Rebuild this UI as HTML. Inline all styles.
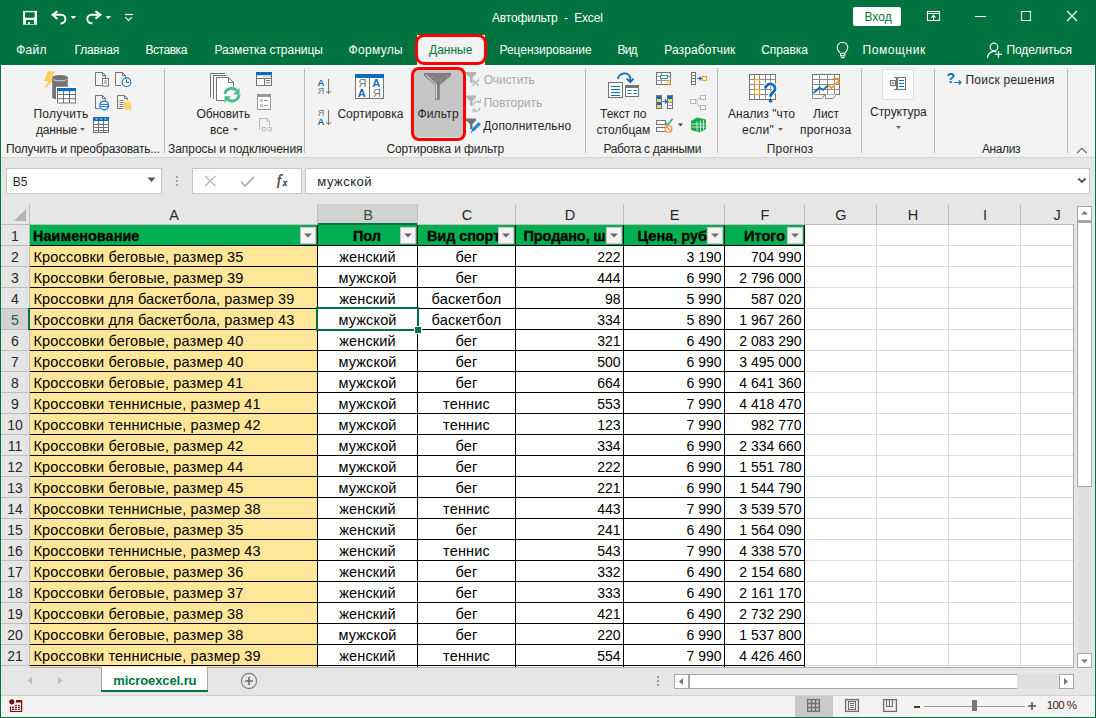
<!DOCTYPE html>
<html><head><meta charset="utf-8"><title>Автофильтр - Excel</title>
<style>
html,body{margin:0;padding:0;}
body{width:1096px;height:718px;overflow:hidden;position:relative;background:#f3f3f3;font-family:"Liberation Sans",sans-serif;}
body>div,body>span,body>svg{position:absolute;}
.t{white-space:pre;line-height:1;}
</style></head><body>
<div style="left:0px;top:0px;width:1096px;height:65px;background:#00733f"></div>
<svg style="left:22px;top:10px;" width="16" height="16" viewBox="0 0 16 16"><rect x="1.1" y="0.9" width="13.9" height="13.8" fill="#fff"/><path d="M3 2.2H12.7V7L11.8 7.8H3.9L3 7z" fill="#00733f"/><path d="M4 10H12V13.9H7.9V12H6.1V13.9H4z" fill="#00733f"/></svg>
<svg style="left:51px;top:10px;" width="18" height="15" viewBox="0 0 18 15"><path d="M1.8 4.8H10.2A4.2 4.3 0 0 1 10.2 13.4H9.5" fill="none" stroke="#fff" stroke-width="2"/><path d="M6.4 1.2L1.6 4.8L6.4 8.9" fill="none" stroke="#fff" stroke-width="2"/></svg>
<svg style="left:70px;top:15px;" width="7" height="5" viewBox="0 0 7 5"><path d="M0.6 1h5.6l-2.8 3z" fill="#fff"/></svg>
<svg style="left:86px;top:10px;" width="18" height="15" viewBox="0 0 18 15"><path d="M14.6 4.8H5.5A4.2 4.2 0 0 0 5.5 13.2H6.5" fill="none" stroke="#fff" stroke-width="2"/><path d="M9.4 1.2L14.4 4.8L9.4 8.6" fill="none" stroke="#fff" stroke-width="2"/></svg>
<svg style="left:105px;top:15px;" width="7" height="5" viewBox="0 0 7 5"><path d="M0.6 1h5.6l-2.8 3z" fill="#fff"/></svg>
<svg style="left:124px;top:13px;" width="10" height="9" viewBox="0 0 10 9"><path d="M1 1.5h8" stroke="#fff" stroke-width="1.2"/><path d="M1.2 4.2l3.3 3.3 3.5-3.3" fill="none" stroke="#fff" stroke-width="1.1"/></svg>
<span class="t" style="left:492px;top:11.84px;font-size:12px;color:#fff;font-weight:normal;letter-spacing:-0.158px;">Автофильтр&nbsp;&nbsp;-&nbsp;&nbsp;Excel</span>
<div style="left:853px;top:7px;width:48px;height:19px;background:#fff;border-radius:2px"></div>
<span class="t" style="left:864.5px;top:10.84px;font-size:12px;color:#00733f;font-weight:normal;letter-spacing:0px">Вход</span>
<svg style="left:926px;top:10px;" width="15" height="12" viewBox="0 0 15 12"><rect x="1.5" y="1.5" width="12" height="9" fill="none" stroke="#fff" stroke-width="1.1"/><path d="M1.5 3.5h12" stroke="#fff" stroke-width="1"/><path d="M7.5 10v-4.5M5.3 7.6l2.2-2.2 2.2 2.2" fill="none" stroke="#fff" stroke-width="1.1"/></svg>
<div style="left:975px;top:16px;width:11px;height:1px;background:#fff"></div>
<div style="left:1021px;top:11px;width:10px;height:10px;border:1px solid #fff;box-sizing:border-box"></div>
<svg style="left:1066px;top:10px;" width="12" height="12" viewBox="0 0 12 12"><path d="M1 1l10 10M11 1L1 11" stroke="#fff" stroke-width="1.2"/></svg>
<span class="t" style="left:16.25px;top:43.84px;font-size:12px;color:#fff;font-weight:normal;letter-spacing:0.25px;">Файл</span>
<span class="t" style="left:74.5px;top:43.84px;font-size:12px;color:#fff;font-weight:normal;letter-spacing:-0.167px;">Главная</span>
<span class="t" style="left:145.5px;top:43.84px;font-size:12px;color:#fff;font-weight:normal;letter-spacing:-0.458px;">Вставка</span>
<span class="t" style="left:214.5px;top:43.84px;font-size:12px;color:#fff;font-weight:normal;letter-spacing:-0.031px;">Разметка страницы</span>
<span class="t" style="left:348.5px;top:43.84px;font-size:12px;color:#fff;font-weight:normal;letter-spacing:0.333px;">Формулы</span>
<span class="t" style="left:499.5px;top:43.84px;font-size:12px;color:#fff;font-weight:normal;letter-spacing:-0.038px;">Рецензирование</span>
<span class="t" style="left:617.5px;top:43.84px;font-size:12px;color:#fff;font-weight:normal;letter-spacing:-0.85px;">Вид</span>
<span class="t" style="left:664.25px;top:43.84px;font-size:12px;color:#fff;font-weight:normal;letter-spacing:0.1px;">Разработчик</span>
<span class="t" style="left:761.25px;top:43.84px;font-size:12px;color:#fff;font-weight:normal;letter-spacing:-0.083px;">Справка</span>
<span class="t" style="left:862.5px;top:43.84px;font-size:12px;color:#fff;font-weight:normal;letter-spacing:0.571px;">Помощник</span>
<span class="t" style="left:1006.5px;top:43.84px;font-size:12px;color:#fff;font-weight:normal;letter-spacing:-0.083px;">Поделиться</span>
<div style="left:417px;top:35px;width:68px;height:31px;background:#f3f3f3"></div>
<span class="t" style="left:429px;top:43.84px;font-size:12px;color:#00733f;font-weight:normal;letter-spacing:0.0px;">Данные</span>
<svg style="left:835px;top:41px;" width="16" height="19" viewBox="0 0 16 19"><path d="M4.8 11.8C3.5 10.2 2.2 8.8 2.2 6.6A5.3 5.4 0 0 1 12.8 6.6C12.8 8.8 11.5 10.2 10.2 11.8" fill="none" stroke="#fff" stroke-width="1.1"/><rect x="5.6" y="12.3" width="4.2" height="2.5" fill="none" stroke="#fff" stroke-width="1.1"/><path d="M6 16.6H9.4" stroke="#fff" stroke-width="1.2"/></svg>
<svg style="left:986px;top:42px;" width="18" height="17" viewBox="0 0 18 17"><circle cx="8" cy="5" r="3.8" fill="none" stroke="#fff" stroke-width="1.2"/><path d="M1.5 16a6.5 6.5 0 0 1 9-6" fill="none" stroke="#fff" stroke-width="1.2"/><path d="M12.5 9v6.8M9.2 12.4h6.8" stroke="#fff" stroke-width="1.2"/></svg>
<div style="left:1px;top:65px;width:1094px;height:93px;background:#f3f3f3;border-top:1px solid #fff;border-bottom:1px solid #d5d5d5;box-sizing:border-box"></div>
<div style="left:1px;top:65px;width:1px;height:92px;background:#fff"></div>
<div style="left:415px;top:34px;width:72px;height:31px;border:3px solid #f00;border-radius:9px;box-sizing:border-box"></div>
<div style="left:164px;top:69px;width:1px;height:84px;background:#b9b9b9"></div>
<div style="left:304px;top:69px;width:1px;height:84px;background:#b9b9b9"></div>
<div style="left:585px;top:69px;width:1px;height:84px;background:#b9b9b9"></div>
<div style="left:717px;top:69px;width:1px;height:84px;background:#b9b9b9"></div>
<div style="left:861px;top:69px;width:1px;height:84px;background:#b9b9b9"></div>
<div style="left:934px;top:69px;width:1px;height:84px;background:#b9b9b9"></div>
<div style="left:1067px;top:69px;width:1px;height:84px;background:#b9b9b9"></div>
<svg style="left:40px;top:68px;" width="40" height="38" viewBox="0 0 40 38">
<path d="M7.9 3.2H14.8L10.8 11.2H14.2L4.2 21.9L8.2 13H4z" fill="#f9cf5a"/>
<path d="M12.2 9.6V29.5A7.8 2 0 0 0 27.8 29.5V9.6z" fill="#737373"/>
<ellipse cx="20" cy="9.6" rx="7.8" ry="2.6" fill="#737373"/>
<path d="M13.5 11.3A6.5 1.6 0 0 0 26.5 11.3" fill="none" stroke="#e8e8e8" stroke-width=".9"/>
<rect x="16" y="18.8" width="21" height="17.2" fill="#fff"/>
<rect x="17.5" y="20.5" width="18" height="14.5" fill="#fff" stroke="#737373" stroke-width="1"/>
<rect x="17" y="20" width="19" height="3.2" fill="#0f6cbd"/>
<path d="M17.5 26.5h18M17.5 30.7h18M23.5 23v12M29.5 23v12" stroke="#737373" stroke-width="1"/>
</svg>
<span class="t" style="left:33.4px;top:107.84px;font-size:12px;color:#262626;font-weight:normal;letter-spacing:0.314px;">Получить</span>
<span class="t" style="left:36px;top:124.14px;font-size:12px;color:#262626;font-weight:normal;letter-spacing:-0.2px;">данные</span>
<svg style="left:80px;top:128px;" width="6" height="4" viewBox="0 0 6 4"><path d="M0 0h5l-2.5 3z" fill="#666"/></svg>
<svg style="left:90px;top:68px;" width="46" height="68" viewBox="0 0 46 68">
<path d="M5.5 17.5V4.5H12.5L15.5 7.5V10.5" fill="none" stroke="#737373"/><path d="M12.5 4.5V7.5H15.5" fill="none" stroke="#737373"/><path d="M11.5 17.5H5.5" stroke="#737373"/>
<rect x="12.5" y="10.5" width="6" height="7.5" fill="#fff" stroke="#737373"/><path d="M14 13h3M14 15h3" stroke="#737373" stroke-width=".9"/>
<path d="M25.5 17.5V4.5H32.5L35.5 7.5V10" fill="none" stroke="#737373"/><path d="M32.5 4.5V7.5H35.5" fill="none" stroke="#737373"/><path d="M25.5 17.5H31" stroke="#737373"/>
<circle cx="36.5" cy="14.2" r="4.3" fill="#fff" stroke="#1e7bd0" stroke-width="1.2"/><path d="M36.5 11.5V14.5H39" fill="none" stroke="#444" stroke-width="1"/>
<path d="M5.5 40.5V27.5H12.5L15.5 30.5V33" fill="none" stroke="#737373"/><path d="M12.5 27.5V30.5H15.5" fill="none" stroke="#737373"/><path d="M5.5 40.5H9.5" stroke="#737373"/>
<circle cx="14.2" cy="37.4" r="4.3" fill="#fff" stroke="#1e7bd0" stroke-width="1.4"/><path d="M10.5 36.5h7.5M10.5 38.5h7.5" stroke="#1e7bd0" stroke-width="1"/>
<path d="M27.5 40.5V27.5H34.5L37.5 30.5V32" fill="none" stroke="#737373"/><path d="M34.5 27.5V30.5H37.5" fill="none" stroke="#737373"/><path d="M27.5 40.5H33" stroke="#737373"/>
<path d="M29.5 32.5h4M29.5 34.5h4M29.5 36.5h4M29.5 38.5h4" stroke="#737373" stroke-width=".9"/>
<rect x="34" y="32.5" width="7.2" height="9.2" rx="1.5" fill="#fbd26a"/><path d="M34.5 33.8h6.2" stroke="#fff" stroke-width=".8"/>
<rect x="3.5" y="49.5" width="15" height="15" fill="#fff" stroke="#737373"/>
<rect x="3" y="49" width="16" height="4" fill="#0f6cbd"/><path d="M5.5 51h2M10 51h2M14.5 51h2" stroke="#fff" stroke-width=".9"/>
<path d="M3.5 56.5h15M3.5 59.5h15M3.5 62.5h15M8.5 53v12M13.5 53v12" stroke="#737373" stroke-width="1"/>
</svg>
<span class="t" style="left:6px;top:143.24px;font-size:12px;color:#262626;font-weight:normal;letter-spacing:-0.2px">Получить и преобразовать...</span>
<svg style="left:205px;top:68px;" width="40" height="38" viewBox="0 0 40 38">
<path d="M5.5 29V5.5H20" fill="none" stroke="#737373"/>
<path d="M8.5 30.8V7.5H21.8" fill="none" stroke="#737373"/>
<path d="M11.5 32.5V9.5H23.5L28.5 14.5V32.5z" fill="#fff"/>
<path d="M19 32.5H11.5V9.5H23.5L28.5 14.5V18.5" fill="none" stroke="#737373"/>
<path d="M23.5 9.5V14.5H28.5" fill="none" stroke="#737373"/>
<path d="M19.8 26A7 7 0 0 1 31.8 22.5" fill="none" stroke="#4cb98a" stroke-width="2.8"/>
<path d="M34.2 26.5A7 7 0 0 1 22.2 30.8" fill="none" stroke="#4cb98a" stroke-width="2.8"/>
<path d="M34.5 20V26.5H28z" fill="#4cb98a"/>
<path d="M19.5 35V28.3H26z" fill="#4cb98a"/>
</svg>
<span class="t" style="left:196.5px;top:107.84px;font-size:12px;color:#262626;font-weight:normal;letter-spacing:-0.086px;">Обновить</span>
<span class="t" style="left:210px;top:124.14px;font-size:12px;color:#262626;font-weight:normal;">все</span>
<svg style="left:233px;top:128px;" width="6" height="4" viewBox="0 0 6 4"><path d="M0 0h5l-2.5 3z" fill="#666"/></svg>
<svg style="left:250px;top:68px;" width="30" height="68" viewBox="0 0 30 68">
<rect x="6.5" y="4.5" width="15" height="13" fill="#fff" stroke="#737373"/><rect x="6" y="4" width="16" height="3.2" fill="#0f6cbd"/>
<path d="M6.5 10.5h15M14.5 10.5v7" stroke="#737373" stroke-width="1"/><path d="M13.5 8.8h1M15.5 8.8h1M17.5 8.8h1M19.5 8.8h1" stroke="#737373" stroke-width=".9"/>
<path d="M16 12.5h4M16 14.8h4" stroke="#737373" stroke-width="1"/>
<rect x="7.5" y="26.5" width="13" height="15" fill="#fff" stroke="#9a9a9a"/><rect x="7" y="26" width="14" height="3" fill="#9a9a9a"/>
<circle cx="11.4" cy="32.5" r="1.2" fill="#9a9a9a"/><circle cx="11.4" cy="37.5" r="1.2" fill="none" stroke="#9a9a9a" stroke-width=".9"/><path d="M14 32.5h4M14 37.5h4" stroke="#9a9a9a" stroke-width="1.1"/>
<path d="M9.5 62V50.5H17L19.5 53V58" fill="none" stroke="#b8b8b8"/><path d="M17 50.5V53H19.5" fill="none" stroke="#b8b8b8"/>
<path d="M16 59.5H13.5A1.8 1.8 0 0 0 13.5 63H16M18 59.5H20.5A1.8 1.8 0 0 1 20.5 63H18M14.5 61.2H19.5" fill="none" stroke="#b8b8b8" stroke-width="1.1"/>
</svg>
<span class="t" style="left:168px;top:143.24px;font-size:12px;color:#262626;font-weight:normal;letter-spacing:-0.05px;">Запросы и подключения</span>
<svg style="left:316px;top:77px;" width="17" height="50" viewBox="0 0 17 50">
<text x="1.6" y="8.8" font-family="Liberation Sans" font-size="9.5" font-weight="bold" fill="#0f6cbd">A</text>
<text x="1.8" y="16.8" font-family="Liberation Sans" font-size="9" fill="#737373">Я</text>
<path d="M12.6 2v14.5M10.1 14l2.5 2.6 2.5-2.6" fill="none" stroke="#6e6e6e" stroke-width="1"/>
<text x="1.8" y="39.4" font-family="Liberation Sans" font-size="9" fill="#737373">Я</text>
<text x="1.6" y="47.9" font-family="Liberation Sans" font-size="9.5" font-weight="bold" fill="#0f6cbd">A</text>
<path d="M12.6 33v14.5M10.1 45l2.5 2.6 2.5-2.6" fill="none" stroke="#6e6e6e" stroke-width="1"/>
</svg>
<svg style="left:354px;top:73px;" width="31" height="27" viewBox="0 0 31 27">
<rect x="1.5" y="1.5" width="28" height="24" fill="#fff" stroke="#737373"/>
<rect x="1" y="1" width="29" height="4" fill="#0f6cbd"/>
<path d="M15.5 5v20.5" stroke="#737373"/>
<text x="4.5" y="14" font-family="Liberation Sans" font-size="11" fill="#737373">Я</text>
<text x="3.8" y="24" font-family="Liberation Sans" font-size="11" font-weight="bold" fill="#0f6cbd">A</text>
<text x="18.3" y="14" font-family="Liberation Sans" font-size="11" font-weight="bold" fill="#0f6cbd">A</text>
<text x="19" y="24" font-family="Liberation Sans" font-size="11" fill="#737373">Я</text>
</svg>
<span class="t" style="left:337.4px;top:107.84px;font-size:12px;color:#262626;font-weight:normal;letter-spacing:0.022px;">Сортировка</span>
<div style="left:414px;top:70px;width:49px;height:67px;background:#c6c6c6;border-radius:3px"></div>
<div style="left:411px;top:67px;width:55px;height:74px;border:3px solid #f00;border-radius:8px;box-sizing:border-box"></div>
<svg style="left:423px;top:72px;" width="29" height="29" viewBox="0 0 29 29"><path d="M1 1H28V3.5L16.8 13.3V27.8H12V13.3L1 3.5Z" fill="#7f7f7f"/><path d="M3 2.8L13.3 12.8V26.5" fill="none" stroke="#fff" stroke-width="0.9"/><circle cx="9" cy="5" r=".6" fill="#ddd"/><circle cx="12" cy="8" r=".6" fill="#ddd"/><circle cx="15" cy="8" r=".6" fill="#ddd"/><circle cx="18" cy="8" r=".6" fill="#ddd"/><circle cx="13" cy="11" r=".6" fill="#ddd"/><circle cx="18" cy="11" r=".6" fill="#ddd"/><circle cx="24" cy="4" r=".6" fill="#ddd"/></svg>
<span class="t" style="left:417.4px;top:107.84px;font-size:12px;color:#262626;font-weight:normal;letter-spacing:0.18px;">Фильтр</span>
<svg style="left:465px;top:71px;" width="17" height="64" viewBox="0 0 17 64">
<path d="M1 1h10v2l-3.5 3.5v5H5V6.5L1 3z" fill="#b4b4b4"/><path d="M6 11.5h3M7.5 8.5l6.5 6.5M14 8.5l-6.5 6.5" fill="none" stroke="#b4b4b4" stroke-width="1.1"/>
<path d="M1 24.5h10v2l-3.5 3.5v5H5v-5L1 26.5z" fill="#b4b4b4"/><path d="M8.5 34a4 4 0 0 1 6.5-3M15 36.5a4 4 0 0 1-6.5 3" fill="none" stroke="#b4b4b4" stroke-width="1.1"/><path d="M15.5 28.5v3h-3M8 41.5v-3h3" fill="none" stroke="#b4b4b4" stroke-width="1"/>
<path d="M1 47.5h10v2l-3.5 3.5v5H5v-5L1 49.5z" fill="#737373"/><path d="M6 61l1.2-3.5 6.5-6.5 2.3 2.3-6.5 6.5z" fill="#1e8ad8"/><path d="M6 62l1.5-1.5" stroke="#1e8ad8" stroke-width="1"/>
</svg>
<span class="t" style="left:483.7px;top:74.04px;font-size:12px;color:#a8a8a8;font-weight:normal;letter-spacing:-0.157px;">Очистить</span>
<span class="t" style="left:483.7px;top:97.24px;font-size:12px;color:#a8a8a8;font-weight:normal;">Повторить</span>
<span class="t" style="left:483.2px;top:119.94px;font-size:12px;color:#262626;font-weight:normal;letter-spacing:0.133px;">Дополнительно</span>
<span class="t" style="left:386.5px;top:143.24px;font-size:12px;color:#262626;font-weight:normal;letter-spacing:-0.139px;">Сортировка и фильтр</span>
<svg style="left:604px;top:68px;" width="40" height="34" viewBox="0 0 40 34">
<path d="M14 11A6.3 5.8 0 0 1 26.3 9.5V13" fill="none" stroke="#0f6cbd" stroke-width="1.8"/><path d="M22.8 10.6L26.3 14.2L29.6 10.6" fill="none" stroke="#0f6cbd" stroke-width="1.8"/>
<rect x="4.5" y="14.5" width="14" height="15" fill="#fff" stroke="#737373"/>
<path d="M7 18.5h9M7 21.5h9M7 24.5h9M7 27.5h9" stroke="#0f6cbd" stroke-width="1"/>
<rect x="21.5" y="17.5" width="13" height="11" fill="#fff" stroke="#737373"/><rect x="21" y="17" width="14" height="3" fill="#737373"/>
<path d="M23.5 22.5h4M29.5 22.5h3.5M23.5 25.5h4M29.5 25.5h3.5" stroke="#0f6cbd" stroke-width="1"/>
</svg>
<span class="t" style="left:600px;top:107.84px;font-size:12px;color:#262626;font-weight:normal;letter-spacing:-0.029px;">Текст по</span>
<span class="t" style="left:596.5px;top:124.14px;font-size:12px;color:#262626;font-weight:normal;letter-spacing:0.057px;">столбцам</span>
<svg style="left:652px;top:68px;" width="58" height="68" viewBox="0 0 58 68">
<rect x="4.5" y="4.5" width="14" height="12" fill="#fff" stroke="#737373"/><path d="M4.5 8.5h14M4.5 12.5h14M9.5 4.5v12" stroke="#9a9a9a" stroke-width="1"/>
<rect x="8.5" y="7.5" width="7" height="3" fill="#fff" stroke="#2a9d8f" stroke-width="1.1"/>
<path d="M19.5 10L14 15.5H17L13 20.5L20 14H17z" fill="#f9cf5a"/>
<rect x="4.5" y="27.5" width="5" height="13" fill="#fff" stroke="#737373"/><rect x="5" y="28" width="4" height="3" fill="#0f6cbd"/><rect x="5" y="31" width="4" height="3" fill="#fbd26a"/><rect x="5" y="34" width="4" height="3" fill="#0f6cbd"/><rect x="5" y="37" width="4" height="3" fill="#fbd26a"/>
<rect x="15.5" y="27.5" width="5" height="13" fill="#fff" stroke="#737373"/><rect x="16" y="28" width="4" height="3" fill="#0f6cbd"/><rect x="16" y="31" width="4" height="3" fill="#fbd26a"/><path d="M15.5 34.5h5M15.5 37.5h5" stroke="#9a9a9a"/>
<path d="M10.5 33.5h4M13 31.5l2 2-2 2" fill="none" stroke="#0f6cbd" stroke-width="1.2"/>
<rect x="4.5" y="52.5" width="9" height="4" fill="#fff" stroke="#737373"/><rect x="4.5" y="59.5" width="9" height="4" fill="#fff" stroke="#737373"/>
<path d="M13 54.5l2.5 2.5 5-6" fill="none" stroke="#2a9d8f" stroke-width="1.5"/>
<circle cx="16.5" cy="61" r="3.3" fill="#fff" stroke="#f39a2a" stroke-width="1.3"/><path d="M14.3 58.8l4.4 4.4" stroke="#e23b3b" stroke-width="1"/>
<path d="M26 55.5h5l-2.5 2.8z" fill="#5a2a2a"/>
<rect x="39.5" y="4.5" width="4" height="12" fill="#fff" stroke="#737373"/><path d="M39.5 7.5h4M39.5 10.5h4M39.5 13.5h4" stroke="#737373"/>
<path d="M45 10.5h4M47.5 8.8l1.8 1.7-1.8 1.7" fill="none" stroke="#0f6cbd" stroke-width="1.2"/>
<rect x="50.5" y="8.5" width="4" height="4" fill="#fff" stroke="#f39a2a" stroke-width="1.2"/>
<rect x="38.5" y="31.5" width="5" height="4" fill="#fff" stroke="#b4b4b4"/><rect x="48.5" y="27.5" width="5" height="4" fill="#fff" stroke="#b4b4b4"/><rect x="48.5" y="37.5" width="5" height="4" fill="#fff" stroke="#b4b4b4"/>
<path d="M43.5 33.5L48.5 29.5M43.5 33.5L48.5 39.5" fill="none" stroke="#b4b4b4"/>
<path d="M39 53L45 49.5L54 51.5V61L48 64.5L39 62z" fill="#1aa84a"/>
<path d="M45 53.5V63.5M48.5 52.5V64M51.5 52V62M39.5 56h14M39.5 59h14" stroke="#e9f7ee" stroke-width=".8"/>
</svg>
<span class="t" style="left:603.4px;top:143.24px;font-size:12px;color:#262626;font-weight:normal;letter-spacing:-0.32px;">Работа с данными</span>
<svg style="left:744px;top:68px;" width="40" height="38" viewBox="0 0 40 38">
<rect x="5.5" y="6.5" width="26" height="25" fill="#fff" stroke="#737373"/>
<path d="M5.5 11.5h26M5.5 16.5h26M5.5 21.5h26M5.5 26.5h26M10.5 6.5v25M15.5 6.5v25M21.5 6.5v25M26.5 6.5v25" stroke="#8a8a8a" stroke-width="1"/>
<rect x="10.5" y="11.5" width="5" height="5" fill="#fff" stroke="#f39a2a" stroke-width="1.1"/>
<rect x="10.5" y="21.5" width="5" height="5" fill="#fff" stroke="#f39a2a" stroke-width="1.1"/>
<path d="M21.5 20.5A4.8 4.5 0 1 1 29.3 24C27.8 25 26.5 26 26.5 28.8" fill="none" stroke="#fff" stroke-width="5"/>
<path d="M21.5 20.5A4.8 4.5 0 1 1 29.3 24C27.8 25 26.5 26 26.5 28.8" fill="none" stroke="#0f6cbd" stroke-width="2.8"/><rect x="24.8" y="31" width="3.4" height="3.4" fill="#0f6cbd"/>
</svg>
<span class="t" style="left:728px;top:107.84px;font-size:12px;color:#262626;font-weight:normal;letter-spacing:0.06px;">Анализ "что</span>
<span class="t" style="left:742px;top:124.14px;font-size:12px;color:#262626;font-weight:normal;letter-spacing:0.25px;">если"</span>
<svg style="left:778px;top:128px;" width="6" height="4" viewBox="0 0 6 4"><path d="M0 0h5l-2.5 3z" fill="#666"/></svg>
<svg style="left:810px;top:72px;" width="32" height="30" viewBox="0 0 32 30">
<rect x="2.5" y="2.5" width="27" height="20" fill="#fff" stroke="#737373"/>
<path d="M2.5 7.5h27M2.5 12.5h27M2.5 17.5h27M9.5 2.5v20M17.5 2.5v20M24.5 2.5v20" stroke="#8a8a8a" stroke-width="1"/>
<path d="M2.5 22.5V26.5H12L14.5 23M15.5 22.5V26.5H23L26.5 22.5" fill="#fff" stroke="#8a8a8a"/>
<path d="M3.5 21L9.5 15.5L13 18L18 13.5" fill="none" stroke="#0f6cbd" stroke-width="1.7"/>
<path d="M18 13.5L21.5 16L27.5 9.5" fill="none" stroke="#f39a2a" stroke-width="1.7"/>
<path d="M23 6.5H28.5V12" fill="none" stroke="#f39a2a" stroke-width="1.7"/>
</svg>
<span class="t" style="left:813px;top:107.84px;font-size:12px;color:#262626;font-weight:normal;letter-spacing:0.0px;">Лист</span>
<span class="t" style="left:800px;top:124.14px;font-size:12px;color:#262626;font-weight:normal;letter-spacing:0.214px;">прогноза</span>
<span class="t" style="left:766.7px;top:143.24px;font-size:12px;color:#262626;font-weight:normal;letter-spacing:0.217px;">Прогноз</span>
<div style="left:882px;top:69px;width:32px;height:31px;background:#fdfdfd;border:1px solid #dcdcdc;box-sizing:border-box"></div>
<svg style="left:889px;top:76px;" width="19" height="15" viewBox="0 0 19 15"><rect x="1.5" y="4.5" width="5" height="5" fill="none" stroke="#737373"/><path d="M2.5 7h3M4 5.5v3" stroke="#737373" stroke-width=".9"/><path d="M5 1.5h2.5v12H5" fill="none" stroke="#737373"/><rect x="8.5" y="1.5" width="8" height="12" fill="#fff" stroke="#737373"/><path d="M10 4.5h5M10 7.5h5M10 10.5h5" stroke="#0f6cbd" stroke-width="1.2"/></svg>
<span class="t" style="left:870px;top:105.84px;font-size:12px;color:#262626;font-weight:normal;letter-spacing:-0.025px;">Структура</span>
<svg style="left:896px;top:126px;" width="6" height="4" viewBox="0 0 6 4"><path d="M0 0h5l-2.5 3z" fill="#666"/></svg>
<svg style="left:946px;top:71px;" width="17" height="15" viewBox="0 0 17 15"><text x="0.6" y="12" font-family="Liberation Sans" font-size="14" font-weight="bold" fill="#0f6cbd">?</text><path d="M8.5 11.5h6.5M12.8 9.3l2.2 2.2-2.2 2.2" fill="none" stroke="#0f6cbd" stroke-width="1.2"/></svg>
<span class="t" style="left:965.4px;top:73.84px;font-size:12px;color:#262626;font-weight:normal;letter-spacing:0.25px;">Поиск решения</span>
<span class="t" style="left:982px;top:143.24px;font-size:12px;color:#262626;font-weight:normal;letter-spacing:-0.4px;">Анализ</span>
<svg style="left:1076px;top:147px;" width="12" height="7" viewBox="0 0 12 7"><path d="M1 6.2L5.8 1.2L10.8 6.2" fill="none" stroke="#555" stroke-width="1.1"/></svg>
<div style="left:1px;top:158px;width:1094px;height:46px;background:#e6e6e6"></div>
<div style="left:6px;top:168px;width:156px;height:26px;background:#fff;border:1px solid #c6c6c6;box-sizing:border-box"></div>
<span class="t" style="left:12.8px;top:176.34px;font-size:12px;color:#262626;font-weight:normal;">B5</span>
<svg style="left:147px;top:177px;" width="9" height="6" viewBox="0 0 9 6"><path d="M0.5 0.5h8l-4 4.5z" fill="#555"/></svg>
<svg style="left:175px;top:175px;" width="4" height="12" viewBox="0 0 4 12"><circle cx="2" cy="2" r="1" fill="#8a8a8a"/><circle cx="2" cy="6" r="1" fill="#8a8a8a"/><circle cx="2" cy="10" r="1" fill="#8a8a8a"/></svg>
<div style="left:192px;top:168px;width:110px;height:26px;background:#fff;border:1px solid #c6c6c6;box-sizing:border-box"></div>
<svg style="left:204px;top:175px;" width="13" height="12" viewBox="0 0 13 12"><path d="M1 1l10.5 10M11.5 1L1 11" stroke="#b3b3b3" stroke-width="1.4"/></svg>
<svg style="left:240px;top:176px;" width="15" height="11" viewBox="0 0 15 11"><path d="M1 5.5l4 4.5 9-9" fill="none" stroke="#b3b3b3" stroke-width="1.8"/></svg>
<svg style="left:276px;top:174px;" width="16" height="14" viewBox="0 0 16 14"><text x="1" y="11" font-family="Liberation Serif" font-style="italic" font-size="14" fill="#444" stroke="#444" stroke-width="0.5">f</text><text x="6.8" y="11.5" font-family="Liberation Serif" font-style="italic" font-size="10" fill="#444" stroke="#444" stroke-width="0.4">x</text></svg>
<div style="left:305px;top:168px;width:785px;height:26px;background:#fff;border:1px solid #c6c6c6;box-sizing:border-box"></div>
<span class="t" style="left:317.3px;top:175.30px;font-size:13px;color:#262626;font-weight:normal;letter-spacing:0.5px">мужской</span>
<svg style="left:1077px;top:177px;" width="10" height="7" viewBox="0 0 10 7"><path d="M1.3 1.5l3.6 3.5 3.6-3.5" fill="none" stroke="#555" stroke-width="1.9"/></svg>
<div style="left:1px;top:204px;width:1094px;height:463px;background:#e6e6e6"></div>
<div style="left:30px;top:225px;width:1043px;height:442px;background:#fff"></div>
<div style="left:318px;top:204px;width:99px;height:20px;background:#d2d2d2"></div>
<div style="left:317px;top:204px;width:1px;height:20px;background:#bdbdbd"></div>
<div style="left:417px;top:204px;width:1px;height:20px;background:#bdbdbd"></div>
<div style="left:515px;top:204px;width:1px;height:20px;background:#bdbdbd"></div>
<div style="left:623px;top:204px;width:1px;height:20px;background:#bdbdbd"></div>
<div style="left:724px;top:204px;width:1px;height:20px;background:#bdbdbd"></div>
<div style="left:804px;top:204px;width:1px;height:20px;background:#bdbdbd"></div>
<div style="left:876px;top:204px;width:1px;height:20px;background:#bdbdbd"></div>
<div style="left:948px;top:204px;width:1px;height:20px;background:#bdbdbd"></div>
<div style="left:1020px;top:204px;width:1px;height:20px;background:#bdbdbd"></div>
<div style="left:29px;top:204px;width:1px;height:463px;background:#bdbdbd"></div>
<div style="left:1px;top:224px;width:1073px;height:1px;background:#bdbdbd"></div>
<span class="t" style="left:-126.0px;width:600px;text-align:center;top:207.73px;font-size:14.5px;color:#262626;font-weight:normal;">A</span>
<span class="t" style="left:68.0px;width:600px;text-align:center;top:207.73px;font-size:14.5px;color:#1f5a40;font-weight:normal;">B</span>
<span class="t" style="left:167.0px;width:600px;text-align:center;top:207.73px;font-size:14.5px;color:#262626;font-weight:normal;">C</span>
<span class="t" style="left:270.0px;width:600px;text-align:center;top:207.73px;font-size:14.5px;color:#262626;font-weight:normal;">D</span>
<span class="t" style="left:374.5px;width:600px;text-align:center;top:207.73px;font-size:14.5px;color:#262626;font-weight:normal;">E</span>
<span class="t" style="left:465.0px;width:600px;text-align:center;top:207.73px;font-size:14.5px;color:#262626;font-weight:normal;">F</span>
<span class="t" style="left:541.0px;width:600px;text-align:center;top:207.73px;font-size:14.5px;color:#262626;font-weight:normal;">G</span>
<span class="t" style="left:613.0px;width:600px;text-align:center;top:207.73px;font-size:14.5px;color:#262626;font-weight:normal;">H</span>
<span class="t" style="left:685.0px;width:600px;text-align:center;top:207.73px;font-size:14.5px;color:#262626;font-weight:normal;">I</span>
<span class="t" style="left:757px;width:600px;text-align:center;top:207.73px;font-size:14.5px;color:#262626;font-weight:normal;">J</span>
<div style="left:318px;top:223px;width:99px;height:2px;background:#00733f"></div>
<svg style="left:13px;top:208px;" width="14" height="14" viewBox="0 0 14 14"><path d="M13 1v12H1z" fill="#b4b4b4"/></svg>
<div style="left:805px;top:245px;width:268px;height:1px;background:#dadada"></div>
<div style="left:805px;top:266px;width:268px;height:1px;background:#dadada"></div>
<div style="left:805px;top:287px;width:268px;height:1px;background:#dadada"></div>
<div style="left:805px;top:308px;width:268px;height:1px;background:#dadada"></div>
<div style="left:805px;top:329px;width:268px;height:1px;background:#dadada"></div>
<div style="left:805px;top:350px;width:268px;height:1px;background:#dadada"></div>
<div style="left:805px;top:371px;width:268px;height:1px;background:#dadada"></div>
<div style="left:805px;top:392px;width:268px;height:1px;background:#dadada"></div>
<div style="left:805px;top:413px;width:268px;height:1px;background:#dadada"></div>
<div style="left:805px;top:434px;width:268px;height:1px;background:#dadada"></div>
<div style="left:805px;top:455px;width:268px;height:1px;background:#dadada"></div>
<div style="left:805px;top:476px;width:268px;height:1px;background:#dadada"></div>
<div style="left:805px;top:497px;width:268px;height:1px;background:#dadada"></div>
<div style="left:805px;top:518px;width:268px;height:1px;background:#dadada"></div>
<div style="left:805px;top:539px;width:268px;height:1px;background:#dadada"></div>
<div style="left:805px;top:560px;width:268px;height:1px;background:#dadada"></div>
<div style="left:805px;top:581px;width:268px;height:1px;background:#dadada"></div>
<div style="left:805px;top:602px;width:268px;height:1px;background:#dadada"></div>
<div style="left:805px;top:623px;width:268px;height:1px;background:#dadada"></div>
<div style="left:805px;top:644px;width:268px;height:1px;background:#dadada"></div>
<div style="left:805px;top:665px;width:268px;height:1px;background:#dadada"></div>
<div style="left:876px;top:225px;width:1px;height:442px;background:#dadada"></div>
<div style="left:948px;top:225px;width:1px;height:442px;background:#dadada"></div>
<div style="left:1020px;top:225px;width:1px;height:442px;background:#dadada"></div>
<div style="left:1073px;top:224px;width:1px;height:443px;background:#ababab"></div>
<div style="left:30px;top:225px;width:775px;height:20px;background:#00b050"></div>
<div style="left:30px;top:246px;width:287px;height:421px;background:#ffe699"></div>
<div style="left:1px;top:309px;width:28px;height:20px;background:#d2d2d2"></div>
<div style="left:1px;top:245px;width:28px;height:1px;background:#bcbcbc"></div>
<span class="t" style="left:-285px;width:600px;text-align:center;top:229.15px;font-size:14px;color:#262626;font-weight:normal;">1</span>
<div style="left:1px;top:266px;width:28px;height:1px;background:#bcbcbc"></div>
<span class="t" style="left:-285px;width:600px;text-align:center;top:250.15px;font-size:14px;color:#262626;font-weight:normal;">2</span>
<div style="left:1px;top:287px;width:28px;height:1px;background:#bcbcbc"></div>
<span class="t" style="left:-285px;width:600px;text-align:center;top:271.15px;font-size:14px;color:#262626;font-weight:normal;">3</span>
<div style="left:1px;top:308px;width:28px;height:1px;background:#bcbcbc"></div>
<span class="t" style="left:-285px;width:600px;text-align:center;top:292.15px;font-size:14px;color:#262626;font-weight:normal;">4</span>
<div style="left:1px;top:329px;width:28px;height:1px;background:#bcbcbc"></div>
<span class="t" style="left:-285px;width:600px;text-align:center;top:313.15px;font-size:14px;color:#1f5a40;font-weight:normal;">5</span>
<div style="left:1px;top:350px;width:28px;height:1px;background:#bcbcbc"></div>
<span class="t" style="left:-285px;width:600px;text-align:center;top:334.15px;font-size:14px;color:#262626;font-weight:normal;">6</span>
<div style="left:1px;top:371px;width:28px;height:1px;background:#bcbcbc"></div>
<span class="t" style="left:-285px;width:600px;text-align:center;top:355.15px;font-size:14px;color:#262626;font-weight:normal;">7</span>
<div style="left:1px;top:392px;width:28px;height:1px;background:#bcbcbc"></div>
<span class="t" style="left:-285px;width:600px;text-align:center;top:376.15px;font-size:14px;color:#262626;font-weight:normal;">8</span>
<div style="left:1px;top:413px;width:28px;height:1px;background:#bcbcbc"></div>
<span class="t" style="left:-285px;width:600px;text-align:center;top:397.15px;font-size:14px;color:#262626;font-weight:normal;">9</span>
<div style="left:1px;top:434px;width:28px;height:1px;background:#bcbcbc"></div>
<span class="t" style="left:-285px;width:600px;text-align:center;top:418.15px;font-size:14px;color:#262626;font-weight:normal;">10</span>
<div style="left:1px;top:455px;width:28px;height:1px;background:#bcbcbc"></div>
<span class="t" style="left:-285px;width:600px;text-align:center;top:439.15px;font-size:14px;color:#262626;font-weight:normal;">11</span>
<div style="left:1px;top:476px;width:28px;height:1px;background:#bcbcbc"></div>
<span class="t" style="left:-285px;width:600px;text-align:center;top:460.15px;font-size:14px;color:#262626;font-weight:normal;">12</span>
<div style="left:1px;top:497px;width:28px;height:1px;background:#bcbcbc"></div>
<span class="t" style="left:-285px;width:600px;text-align:center;top:481.15px;font-size:14px;color:#262626;font-weight:normal;">13</span>
<div style="left:1px;top:518px;width:28px;height:1px;background:#bcbcbc"></div>
<span class="t" style="left:-285px;width:600px;text-align:center;top:502.15px;font-size:14px;color:#262626;font-weight:normal;">14</span>
<div style="left:1px;top:539px;width:28px;height:1px;background:#bcbcbc"></div>
<span class="t" style="left:-285px;width:600px;text-align:center;top:523.15px;font-size:14px;color:#262626;font-weight:normal;">15</span>
<div style="left:1px;top:560px;width:28px;height:1px;background:#bcbcbc"></div>
<span class="t" style="left:-285px;width:600px;text-align:center;top:544.15px;font-size:14px;color:#262626;font-weight:normal;">16</span>
<div style="left:1px;top:581px;width:28px;height:1px;background:#bcbcbc"></div>
<span class="t" style="left:-285px;width:600px;text-align:center;top:565.15px;font-size:14px;color:#262626;font-weight:normal;">17</span>
<div style="left:1px;top:602px;width:28px;height:1px;background:#bcbcbc"></div>
<span class="t" style="left:-285px;width:600px;text-align:center;top:586.15px;font-size:14px;color:#262626;font-weight:normal;">18</span>
<div style="left:1px;top:623px;width:28px;height:1px;background:#bcbcbc"></div>
<span class="t" style="left:-285px;width:600px;text-align:center;top:607.15px;font-size:14px;color:#262626;font-weight:normal;">19</span>
<div style="left:1px;top:644px;width:28px;height:1px;background:#bcbcbc"></div>
<span class="t" style="left:-285px;width:600px;text-align:center;top:628.15px;font-size:14px;color:#262626;font-weight:normal;">20</span>
<div style="left:1px;top:665px;width:28px;height:1px;background:#bcbcbc"></div>
<span class="t" style="left:-285px;width:600px;text-align:center;top:649.15px;font-size:14px;color:#262626;font-weight:normal;">21</span>
<div style="left:28px;top:308px;width:2px;height:22px;background:#00733f"></div>
<div style="left:30px;top:245px;width:775px;height:1px;background:#000"></div>
<div style="left:30px;top:266px;width:775px;height:1px;background:#000"></div>
<div style="left:30px;top:287px;width:775px;height:1px;background:#000"></div>
<div style="left:30px;top:308px;width:775px;height:1px;background:#000"></div>
<div style="left:30px;top:329px;width:775px;height:1px;background:#000"></div>
<div style="left:30px;top:350px;width:775px;height:1px;background:#000"></div>
<div style="left:30px;top:371px;width:775px;height:1px;background:#000"></div>
<div style="left:30px;top:392px;width:775px;height:1px;background:#000"></div>
<div style="left:30px;top:413px;width:775px;height:1px;background:#000"></div>
<div style="left:30px;top:434px;width:775px;height:1px;background:#000"></div>
<div style="left:30px;top:455px;width:775px;height:1px;background:#000"></div>
<div style="left:30px;top:476px;width:775px;height:1px;background:#000"></div>
<div style="left:30px;top:497px;width:775px;height:1px;background:#000"></div>
<div style="left:30px;top:518px;width:775px;height:1px;background:#000"></div>
<div style="left:30px;top:539px;width:775px;height:1px;background:#000"></div>
<div style="left:30px;top:560px;width:775px;height:1px;background:#000"></div>
<div style="left:30px;top:581px;width:775px;height:1px;background:#000"></div>
<div style="left:30px;top:602px;width:775px;height:1px;background:#000"></div>
<div style="left:30px;top:623px;width:775px;height:1px;background:#000"></div>
<div style="left:30px;top:644px;width:775px;height:1px;background:#000"></div>
<div style="left:30px;top:665px;width:775px;height:1px;background:#000"></div>
<div style="left:317px;top:225px;width:1px;height:442px;background:#000"></div>
<div style="left:417px;top:225px;width:1px;height:442px;background:#000"></div>
<div style="left:515px;top:225px;width:1px;height:442px;background:#000"></div>
<div style="left:623px;top:225px;width:1px;height:442px;background:#000"></div>
<div style="left:724px;top:225px;width:1px;height:442px;background:#000"></div>
<div style="left:804px;top:225px;width:1px;height:442px;background:#000"></div>
<span class="t" style="left:33px;top:228.73px;font-size:14.5px;color:#000;font-weight:bold;-webkit-text-stroke:0.3px #000">Наименование</span>
<div style="left:300px;top:227px;width:16px;height:17px;background:#f3f3f3;border:1px solid #c9c3c9;box-sizing:border-box"></div>
<svg style="left:304px;top:233px;" width="8" height="5" viewBox="0 0 8 5"><path d="M0 0.5h8l-4 4z" fill="#6b6b6b"/></svg>
<span class="t" style="left:67px;width:600px;text-align:center;top:228.73px;font-size:14.5px;color:#000;font-weight:bold;-webkit-text-stroke:0.3px #000">Пол</span>
<div style="left:400px;top:227px;width:16px;height:17px;background:#f3f3f3;border:1px solid #c9c3c9;box-sizing:border-box"></div>
<svg style="left:404px;top:233px;" width="8" height="5" viewBox="0 0 8 5"><path d="M0 0.5h8l-4 4z" fill="#6b6b6b"/></svg>
<span class="t" style="left:427px;top:228.73px;font-size:14.5px;color:#000;font-weight:bold;letter-spacing:-0.1px;-webkit-text-stroke:0.3px #000">Вид спорт</span>
<div style="left:498px;top:227px;width:16px;height:17px;background:#f3f3f3;border:1px solid #c9c3c9;box-sizing:border-box"></div>
<svg style="left:502px;top:233px;" width="8" height="5" viewBox="0 0 8 5"><path d="M0 0.5h8l-4 4z" fill="#6b6b6b"/></svg>
<span class="t" style="left:523.5px;top:228.73px;font-size:14.5px;color:#000;font-weight:bold;letter-spacing:-0.1px;-webkit-text-stroke:0.3px #000">Продано, ш</span>
<div style="left:606px;top:227px;width:16px;height:17px;background:#f3f3f3;border:1px solid #c9c3c9;box-sizing:border-box"></div>
<svg style="left:610px;top:233px;" width="8" height="5" viewBox="0 0 8 5"><path d="M0 0.5h8l-4 4z" fill="#6b6b6b"/></svg>
<span class="t" style="left:107px;width:600px;text-align:right;top:228.73px;font-size:14.5px;color:#000;font-weight:bold;-webkit-text-stroke:0.3px #000">Цена, руб</span>
<div style="left:707px;top:227px;width:16px;height:17px;background:#f3f3f3;border:1px solid #c9c3c9;box-sizing:border-box"></div>
<svg style="left:711px;top:233px;" width="8" height="5" viewBox="0 0 8 5"><path d="M0 0.5h8l-4 4z" fill="#6b6b6b"/></svg>
<span class="t" style="left:185px;width:600px;text-align:right;top:228.73px;font-size:14.5px;color:#000;font-weight:bold;-webkit-text-stroke:0.3px #000">Итого</span>
<div style="left:787px;top:227px;width:16px;height:17px;background:#f3f3f3;border:1px solid #c9c3c9;box-sizing:border-box"></div>
<svg style="left:791px;top:233px;" width="8" height="5" viewBox="0 0 8 5"><path d="M0 0.5h8l-4 4z" fill="#6b6b6b"/></svg>
<span class="t" style="left:33.5px;top:249.73px;font-size:14.5px;color:#000;font-weight:normal;letter-spacing:0.15px">Кроссовки беговые, размер 35</span>
<span class="t" style="left:67.5px;width:600px;text-align:center;top:249.73px;font-size:14.5px;color:#000;font-weight:normal;letter-spacing:0.15px">женский</span>
<span class="t" style="left:166.5px;width:600px;text-align:center;top:249.73px;font-size:14.5px;color:#000;font-weight:normal;letter-spacing:0.15px">бег</span>
<span class="t" style="left:20.5px;width:600px;text-align:right;top:250.15px;font-size:14px;color:#000;font-weight:normal;">222</span>
<span class="t" style="left:121.5px;width:600px;text-align:right;top:250.15px;font-size:14px;color:#000;font-weight:normal;">3 190</span>
<span class="t" style="left:201.5px;width:600px;text-align:right;top:250.15px;font-size:14px;color:#000;font-weight:normal;">704 990</span>
<span class="t" style="left:33.5px;top:270.73px;font-size:14.5px;color:#000;font-weight:normal;letter-spacing:0.15px">Кроссовки беговые, размер 39</span>
<span class="t" style="left:67.5px;width:600px;text-align:center;top:270.73px;font-size:14.5px;color:#000;font-weight:normal;letter-spacing:0.15px">мужской</span>
<span class="t" style="left:166.5px;width:600px;text-align:center;top:270.73px;font-size:14.5px;color:#000;font-weight:normal;letter-spacing:0.15px">бег</span>
<span class="t" style="left:20.5px;width:600px;text-align:right;top:271.15px;font-size:14px;color:#000;font-weight:normal;">444</span>
<span class="t" style="left:121.5px;width:600px;text-align:right;top:271.15px;font-size:14px;color:#000;font-weight:normal;">6 990</span>
<span class="t" style="left:201.5px;width:600px;text-align:right;top:271.15px;font-size:14px;color:#000;font-weight:normal;">2 796 000</span>
<span class="t" style="left:33.5px;top:291.73px;font-size:14.5px;color:#000;font-weight:normal;letter-spacing:0.15px">Кроссовки для баскетбола, размер 39</span>
<span class="t" style="left:67.5px;width:600px;text-align:center;top:291.73px;font-size:14.5px;color:#000;font-weight:normal;letter-spacing:0.15px">женский</span>
<span class="t" style="left:166.5px;width:600px;text-align:center;top:291.73px;font-size:14.5px;color:#000;font-weight:normal;letter-spacing:0.15px">баскетбол</span>
<span class="t" style="left:20.5px;width:600px;text-align:right;top:292.15px;font-size:14px;color:#000;font-weight:normal;">98</span>
<span class="t" style="left:121.5px;width:600px;text-align:right;top:292.15px;font-size:14px;color:#000;font-weight:normal;">5 990</span>
<span class="t" style="left:201.5px;width:600px;text-align:right;top:292.15px;font-size:14px;color:#000;font-weight:normal;">587 020</span>
<span class="t" style="left:33.5px;top:312.73px;font-size:14.5px;color:#000;font-weight:normal;letter-spacing:0.15px">Кроссовки для баскетбола, размер 43</span>
<span class="t" style="left:67.5px;width:600px;text-align:center;top:312.73px;font-size:14.5px;color:#000;font-weight:normal;letter-spacing:0.15px">мужской</span>
<span class="t" style="left:166.5px;width:600px;text-align:center;top:312.73px;font-size:14.5px;color:#000;font-weight:normal;letter-spacing:0.15px">баскетбол</span>
<span class="t" style="left:20.5px;width:600px;text-align:right;top:313.15px;font-size:14px;color:#000;font-weight:normal;">334</span>
<span class="t" style="left:121.5px;width:600px;text-align:right;top:313.15px;font-size:14px;color:#000;font-weight:normal;">5 890</span>
<span class="t" style="left:201.5px;width:600px;text-align:right;top:313.15px;font-size:14px;color:#000;font-weight:normal;">1 967 260</span>
<span class="t" style="left:33.5px;top:333.73px;font-size:14.5px;color:#000;font-weight:normal;letter-spacing:0.15px">Кроссовки беговые, размер 40</span>
<span class="t" style="left:67.5px;width:600px;text-align:center;top:333.73px;font-size:14.5px;color:#000;font-weight:normal;letter-spacing:0.15px">женский</span>
<span class="t" style="left:166.5px;width:600px;text-align:center;top:333.73px;font-size:14.5px;color:#000;font-weight:normal;letter-spacing:0.15px">бег</span>
<span class="t" style="left:20.5px;width:600px;text-align:right;top:334.15px;font-size:14px;color:#000;font-weight:normal;">321</span>
<span class="t" style="left:121.5px;width:600px;text-align:right;top:334.15px;font-size:14px;color:#000;font-weight:normal;">6 490</span>
<span class="t" style="left:201.5px;width:600px;text-align:right;top:334.15px;font-size:14px;color:#000;font-weight:normal;">2 083 290</span>
<span class="t" style="left:33.5px;top:354.73px;font-size:14.5px;color:#000;font-weight:normal;letter-spacing:0.15px">Кроссовки беговые, размер 40</span>
<span class="t" style="left:67.5px;width:600px;text-align:center;top:354.73px;font-size:14.5px;color:#000;font-weight:normal;letter-spacing:0.15px">мужской</span>
<span class="t" style="left:166.5px;width:600px;text-align:center;top:354.73px;font-size:14.5px;color:#000;font-weight:normal;letter-spacing:0.15px">бег</span>
<span class="t" style="left:20.5px;width:600px;text-align:right;top:355.15px;font-size:14px;color:#000;font-weight:normal;">500</span>
<span class="t" style="left:121.5px;width:600px;text-align:right;top:355.15px;font-size:14px;color:#000;font-weight:normal;">6 990</span>
<span class="t" style="left:201.5px;width:600px;text-align:right;top:355.15px;font-size:14px;color:#000;font-weight:normal;">3 495 000</span>
<span class="t" style="left:33.5px;top:375.73px;font-size:14.5px;color:#000;font-weight:normal;letter-spacing:0.15px">Кроссовки беговые, размер 41</span>
<span class="t" style="left:67.5px;width:600px;text-align:center;top:375.73px;font-size:14.5px;color:#000;font-weight:normal;letter-spacing:0.15px">мужской</span>
<span class="t" style="left:166.5px;width:600px;text-align:center;top:375.73px;font-size:14.5px;color:#000;font-weight:normal;letter-spacing:0.15px">бег</span>
<span class="t" style="left:20.5px;width:600px;text-align:right;top:376.15px;font-size:14px;color:#000;font-weight:normal;">664</span>
<span class="t" style="left:121.5px;width:600px;text-align:right;top:376.15px;font-size:14px;color:#000;font-weight:normal;">6 990</span>
<span class="t" style="left:201.5px;width:600px;text-align:right;top:376.15px;font-size:14px;color:#000;font-weight:normal;">4 641 360</span>
<span class="t" style="left:33.5px;top:396.73px;font-size:14.5px;color:#000;font-weight:normal;letter-spacing:0.15px">Кроссовки теннисные, размер 41</span>
<span class="t" style="left:67.5px;width:600px;text-align:center;top:396.73px;font-size:14.5px;color:#000;font-weight:normal;letter-spacing:0.15px">мужской</span>
<span class="t" style="left:166.5px;width:600px;text-align:center;top:396.73px;font-size:14.5px;color:#000;font-weight:normal;letter-spacing:0.15px">теннис</span>
<span class="t" style="left:20.5px;width:600px;text-align:right;top:397.15px;font-size:14px;color:#000;font-weight:normal;">553</span>
<span class="t" style="left:121.5px;width:600px;text-align:right;top:397.15px;font-size:14px;color:#000;font-weight:normal;">7 990</span>
<span class="t" style="left:201.5px;width:600px;text-align:right;top:397.15px;font-size:14px;color:#000;font-weight:normal;">4 418 470</span>
<span class="t" style="left:33.5px;top:417.73px;font-size:14.5px;color:#000;font-weight:normal;letter-spacing:0.15px">Кроссовки теннисные, размер 42</span>
<span class="t" style="left:67.5px;width:600px;text-align:center;top:417.73px;font-size:14.5px;color:#000;font-weight:normal;letter-spacing:0.15px">мужской</span>
<span class="t" style="left:166.5px;width:600px;text-align:center;top:417.73px;font-size:14.5px;color:#000;font-weight:normal;letter-spacing:0.15px">теннис</span>
<span class="t" style="left:20.5px;width:600px;text-align:right;top:418.15px;font-size:14px;color:#000;font-weight:normal;">123</span>
<span class="t" style="left:121.5px;width:600px;text-align:right;top:418.15px;font-size:14px;color:#000;font-weight:normal;">7 990</span>
<span class="t" style="left:201.5px;width:600px;text-align:right;top:418.15px;font-size:14px;color:#000;font-weight:normal;">982 770</span>
<span class="t" style="left:33.5px;top:438.73px;font-size:14.5px;color:#000;font-weight:normal;letter-spacing:0.15px">Кроссовки беговые, размер 42</span>
<span class="t" style="left:67.5px;width:600px;text-align:center;top:438.73px;font-size:14.5px;color:#000;font-weight:normal;letter-spacing:0.15px">мужской</span>
<span class="t" style="left:166.5px;width:600px;text-align:center;top:438.73px;font-size:14.5px;color:#000;font-weight:normal;letter-spacing:0.15px">бег</span>
<span class="t" style="left:20.5px;width:600px;text-align:right;top:439.15px;font-size:14px;color:#000;font-weight:normal;">334</span>
<span class="t" style="left:121.5px;width:600px;text-align:right;top:439.15px;font-size:14px;color:#000;font-weight:normal;">6 990</span>
<span class="t" style="left:201.5px;width:600px;text-align:right;top:439.15px;font-size:14px;color:#000;font-weight:normal;">2 334 660</span>
<span class="t" style="left:33.5px;top:459.73px;font-size:14.5px;color:#000;font-weight:normal;letter-spacing:0.15px">Кроссовки беговые, размер 44</span>
<span class="t" style="left:67.5px;width:600px;text-align:center;top:459.73px;font-size:14.5px;color:#000;font-weight:normal;letter-spacing:0.15px">мужской</span>
<span class="t" style="left:166.5px;width:600px;text-align:center;top:459.73px;font-size:14.5px;color:#000;font-weight:normal;letter-spacing:0.15px">бег</span>
<span class="t" style="left:20.5px;width:600px;text-align:right;top:460.15px;font-size:14px;color:#000;font-weight:normal;">222</span>
<span class="t" style="left:121.5px;width:600px;text-align:right;top:460.15px;font-size:14px;color:#000;font-weight:normal;">6 990</span>
<span class="t" style="left:201.5px;width:600px;text-align:right;top:460.15px;font-size:14px;color:#000;font-weight:normal;">1 551 780</span>
<span class="t" style="left:33.5px;top:480.73px;font-size:14.5px;color:#000;font-weight:normal;letter-spacing:0.15px">Кроссовки беговые, размер 45</span>
<span class="t" style="left:67.5px;width:600px;text-align:center;top:480.73px;font-size:14.5px;color:#000;font-weight:normal;letter-spacing:0.15px">мужской</span>
<span class="t" style="left:166.5px;width:600px;text-align:center;top:480.73px;font-size:14.5px;color:#000;font-weight:normal;letter-spacing:0.15px">бег</span>
<span class="t" style="left:20.5px;width:600px;text-align:right;top:481.15px;font-size:14px;color:#000;font-weight:normal;">221</span>
<span class="t" style="left:121.5px;width:600px;text-align:right;top:481.15px;font-size:14px;color:#000;font-weight:normal;">6 990</span>
<span class="t" style="left:201.5px;width:600px;text-align:right;top:481.15px;font-size:14px;color:#000;font-weight:normal;">1 544 790</span>
<span class="t" style="left:33.5px;top:501.73px;font-size:14.5px;color:#000;font-weight:normal;letter-spacing:0.15px">Кроссовки теннисные, размер 38</span>
<span class="t" style="left:67.5px;width:600px;text-align:center;top:501.73px;font-size:14.5px;color:#000;font-weight:normal;letter-spacing:0.15px">женский</span>
<span class="t" style="left:166.5px;width:600px;text-align:center;top:501.73px;font-size:14.5px;color:#000;font-weight:normal;letter-spacing:0.15px">теннис</span>
<span class="t" style="left:20.5px;width:600px;text-align:right;top:502.15px;font-size:14px;color:#000;font-weight:normal;">443</span>
<span class="t" style="left:121.5px;width:600px;text-align:right;top:502.15px;font-size:14px;color:#000;font-weight:normal;">7 990</span>
<span class="t" style="left:201.5px;width:600px;text-align:right;top:502.15px;font-size:14px;color:#000;font-weight:normal;">3 539 570</span>
<span class="t" style="left:33.5px;top:522.73px;font-size:14.5px;color:#000;font-weight:normal;letter-spacing:0.15px">Кроссовки беговые, размер 35</span>
<span class="t" style="left:67.5px;width:600px;text-align:center;top:522.73px;font-size:14.5px;color:#000;font-weight:normal;letter-spacing:0.15px">женский</span>
<span class="t" style="left:166.5px;width:600px;text-align:center;top:522.73px;font-size:14.5px;color:#000;font-weight:normal;letter-spacing:0.15px">бег</span>
<span class="t" style="left:20.5px;width:600px;text-align:right;top:523.15px;font-size:14px;color:#000;font-weight:normal;">241</span>
<span class="t" style="left:121.5px;width:600px;text-align:right;top:523.15px;font-size:14px;color:#000;font-weight:normal;">6 490</span>
<span class="t" style="left:201.5px;width:600px;text-align:right;top:523.15px;font-size:14px;color:#000;font-weight:normal;">1 564 090</span>
<span class="t" style="left:33.5px;top:543.73px;font-size:14.5px;color:#000;font-weight:normal;letter-spacing:0.15px">Кроссовки теннисные, размер 43</span>
<span class="t" style="left:67.5px;width:600px;text-align:center;top:543.73px;font-size:14.5px;color:#000;font-weight:normal;letter-spacing:0.15px">женский</span>
<span class="t" style="left:166.5px;width:600px;text-align:center;top:543.73px;font-size:14.5px;color:#000;font-weight:normal;letter-spacing:0.15px">теннис</span>
<span class="t" style="left:20.5px;width:600px;text-align:right;top:544.15px;font-size:14px;color:#000;font-weight:normal;">543</span>
<span class="t" style="left:121.5px;width:600px;text-align:right;top:544.15px;font-size:14px;color:#000;font-weight:normal;">7 990</span>
<span class="t" style="left:201.5px;width:600px;text-align:right;top:544.15px;font-size:14px;color:#000;font-weight:normal;">4 338 570</span>
<span class="t" style="left:33.5px;top:564.73px;font-size:14.5px;color:#000;font-weight:normal;letter-spacing:0.15px">Кроссовки беговые, размер 36</span>
<span class="t" style="left:67.5px;width:600px;text-align:center;top:564.73px;font-size:14.5px;color:#000;font-weight:normal;letter-spacing:0.15px">женский</span>
<span class="t" style="left:166.5px;width:600px;text-align:center;top:564.73px;font-size:14.5px;color:#000;font-weight:normal;letter-spacing:0.15px">бег</span>
<span class="t" style="left:20.5px;width:600px;text-align:right;top:565.15px;font-size:14px;color:#000;font-weight:normal;">332</span>
<span class="t" style="left:121.5px;width:600px;text-align:right;top:565.15px;font-size:14px;color:#000;font-weight:normal;">6 490</span>
<span class="t" style="left:201.5px;width:600px;text-align:right;top:565.15px;font-size:14px;color:#000;font-weight:normal;">2 154 680</span>
<span class="t" style="left:33.5px;top:585.73px;font-size:14.5px;color:#000;font-weight:normal;letter-spacing:0.15px">Кроссовки беговые, размер 37</span>
<span class="t" style="left:67.5px;width:600px;text-align:center;top:585.73px;font-size:14.5px;color:#000;font-weight:normal;letter-spacing:0.15px">женский</span>
<span class="t" style="left:166.5px;width:600px;text-align:center;top:585.73px;font-size:14.5px;color:#000;font-weight:normal;letter-spacing:0.15px">бег</span>
<span class="t" style="left:20.5px;width:600px;text-align:right;top:586.15px;font-size:14px;color:#000;font-weight:normal;">333</span>
<span class="t" style="left:121.5px;width:600px;text-align:right;top:586.15px;font-size:14px;color:#000;font-weight:normal;">6 490</span>
<span class="t" style="left:201.5px;width:600px;text-align:right;top:586.15px;font-size:14px;color:#000;font-weight:normal;">2 161 170</span>
<span class="t" style="left:33.5px;top:606.73px;font-size:14.5px;color:#000;font-weight:normal;letter-spacing:0.15px">Кроссовки беговые, размер 38</span>
<span class="t" style="left:67.5px;width:600px;text-align:center;top:606.73px;font-size:14.5px;color:#000;font-weight:normal;letter-spacing:0.15px">женский</span>
<span class="t" style="left:166.5px;width:600px;text-align:center;top:606.73px;font-size:14.5px;color:#000;font-weight:normal;letter-spacing:0.15px">бег</span>
<span class="t" style="left:20.5px;width:600px;text-align:right;top:607.15px;font-size:14px;color:#000;font-weight:normal;">421</span>
<span class="t" style="left:121.5px;width:600px;text-align:right;top:607.15px;font-size:14px;color:#000;font-weight:normal;">6 490</span>
<span class="t" style="left:201.5px;width:600px;text-align:right;top:607.15px;font-size:14px;color:#000;font-weight:normal;">2 732 290</span>
<span class="t" style="left:33.5px;top:627.73px;font-size:14.5px;color:#000;font-weight:normal;letter-spacing:0.15px">Кроссовки беговые, размер 38</span>
<span class="t" style="left:67.5px;width:600px;text-align:center;top:627.73px;font-size:14.5px;color:#000;font-weight:normal;letter-spacing:0.15px">мужской</span>
<span class="t" style="left:166.5px;width:600px;text-align:center;top:627.73px;font-size:14.5px;color:#000;font-weight:normal;letter-spacing:0.15px">бег</span>
<span class="t" style="left:20.5px;width:600px;text-align:right;top:628.15px;font-size:14px;color:#000;font-weight:normal;">220</span>
<span class="t" style="left:121.5px;width:600px;text-align:right;top:628.15px;font-size:14px;color:#000;font-weight:normal;">6 990</span>
<span class="t" style="left:201.5px;width:600px;text-align:right;top:628.15px;font-size:14px;color:#000;font-weight:normal;">1 537 800</span>
<span class="t" style="left:33.5px;top:648.73px;font-size:14.5px;color:#000;font-weight:normal;letter-spacing:0.15px">Кроссовки теннисные, размер 39</span>
<span class="t" style="left:67.5px;width:600px;text-align:center;top:648.73px;font-size:14.5px;color:#000;font-weight:normal;letter-spacing:0.15px">женский</span>
<span class="t" style="left:166.5px;width:600px;text-align:center;top:648.73px;font-size:14.5px;color:#000;font-weight:normal;letter-spacing:0.15px">теннис</span>
<span class="t" style="left:20.5px;width:600px;text-align:right;top:649.15px;font-size:14px;color:#000;font-weight:normal;">554</span>
<span class="t" style="left:121.5px;width:600px;text-align:right;top:649.15px;font-size:14px;color:#000;font-weight:normal;">7 990</span>
<span class="t" style="left:201.5px;width:600px;text-align:right;top:649.15px;font-size:14px;color:#000;font-weight:normal;">4 426 460</span>
<div style="left:316px;top:307px;width:103px;height:24px;border:2px solid #00733f;box-sizing:border-box"></div>
<div style="left:415px;top:327px;width:6px;height:6px;background:#00733f;border:1px solid #fff;box-sizing:content-box;left:414px;top:326px"></div>
<div style="left:1077px;top:206px;width:15px;height:461px;background:#e6e6e6"></div>
<div style="left:1077px;top:206px;width:15px;height:15px;background:#fff;border:1px solid #a6a6a6;box-sizing:border-box"></div>
<svg style="left:1080px;top:210px;" width="9" height="6" viewBox="0 0 9 6"><path d="M1 4.5h7L4.5 1z" fill="#777"/></svg>
<div style="left:1077px;top:221px;width:15px;height:266px;background:#fff;border:1px solid #a6a6a6;border-top-width:2px;box-sizing:border-box"></div>
<div style="left:1078px;top:487px;width:13px;height:166px;background:#e0e0e0"></div>
<div style="left:1077px;top:653px;width:15px;height:15px;background:#fff;border:1px solid #a6a6a6;box-sizing:border-box"></div>
<svg style="left:1080px;top:658px;" width="9" height="6" viewBox="0 0 9 6"><path d="M1 1.5h7L4.5 5z" fill="#777"/></svg>
<div style="left:1px;top:667px;width:1094px;height:28px;background:#e6e6e6"></div>
<div style="left:30px;top:667px;width:1044px;height:1px;background:#b0b0b0"></div>
<svg style="left:27px;top:676px;" width="6" height="9" viewBox="0 0 6 9"><path d="M5 0.5v8L0.5 4.5z" fill="#bfbfbf"/></svg>
<svg style="left:57px;top:676px;" width="6" height="9" viewBox="0 0 6 9"><path d="M1 0.5v8l4.5-4z" fill="#bfbfbf"/></svg>
<div style="left:101px;top:667px;width:107px;height:25px;background:#fff;border-left:1px solid #a8a8a8;border-right:1px solid #a8a8a8;box-sizing:border-box"></div>
<div style="left:101px;top:690px;width:107px;height:2px;background:#00733f"></div>
<span class="t" style="left:113.2px;top:674.30px;font-size:13px;color:#00733f;font-weight:bold;letter-spacing:-0.1px">microexcel.ru</span>
<svg style="left:240px;top:672px;" width="18" height="18" viewBox="0 0 18 18"><circle cx="9" cy="9" r="7.6" fill="none" stroke="#7a7a7a" stroke-width="1.1"/><path d="M9 5v8M5 9h8" stroke="#6e6e6e" stroke-width="1.6"/></svg>
<div style="left:657px;top:676px;width:2px;height:2px;background:#9a9a9a"></div>
<div style="left:657px;top:680px;width:2px;height:2px;background:#9a9a9a"></div>
<div style="left:657px;top:684px;width:2px;height:2px;background:#9a9a9a"></div>
<div style="left:674px;top:674px;width:344px;height:15px;background:#fff;border:1px solid #a6a6a6;box-sizing:border-box"></div>
<div style="left:688px;top:674px;width:2px;height:15px;background:#a6a6a6"></div>
<svg style="left:677px;top:677px;" width="8" height="9" viewBox="0 0 8 9"><path d="M6 1v7L2 4.5z" fill="#777"/></svg>
<div style="left:1017px;top:674px;width:42px;height:15px;background:#e0e0e0"></div>
<div style="left:1059px;top:674px;width:15px;height:15px;background:#fff;border:1px solid #a6a6a6;box-sizing:border-box"></div>
<svg style="left:1062px;top:677px;" width="8" height="9" viewBox="0 0 8 9"><path d="M2 1v7l4-3.5z" fill="#777"/></svg>
<div style="left:1077px;top:653px;width:15px;height:15px;background:#fff;border:1px solid #a6a6a6;box-sizing:border-box"></div>
<svg style="left:1080px;top:658px;" width="9" height="6" viewBox="0 0 9 6"><path d="M1 1.5h7L4.5 5z" fill="#777"/></svg>
<div style="left:1px;top:695px;width:1094px;height:22px;background:#f3f3f3;border-top:1px solid #d2d2d2;box-sizing:border-box"></div>
<svg style="left:9px;top:698px;" width="15" height="16" viewBox="0 0 15 16"><circle cx="2.8" cy="3.8" r="2.6" fill="#7b1010"/><rect x="7" y="2" width="6" height="2.5" fill="#7b1010"/><path d="M1.6 8.5v5h11V2.5" fill="none" stroke="#7b1010" stroke-width="1.2"/><path d="M5.9 7.5h2M9 7.5h2M3 9.3h2M5.9 9.3h2M9 9.3h2M3 11.3h2M5.9 11.3h2M9 11.3h2" stroke="#7b1010" stroke-width="1.2"/></svg>
<div style="left:795px;top:696px;width:38px;height:21px;background:#c9c9c9"></div>
<svg style="left:806px;top:698px;" width="15" height="15" viewBox="0 0 15 15"><rect x="1.6" y="1.6" width="11.8" height="11.8" fill="none" stroke="#6e6e6e" stroke-width="1.3"/><path d="M5.5 1.5v12M9.5 1.5v12M1.5 5.5h12M1.5 9.5h12" stroke="#6e6e6e" stroke-width="1.3"/></svg>
<svg style="left:844px;top:698px;" width="16" height="15" viewBox="0 0 16 15"><rect x="1.6" y="1.6" width="12.8" height="11.8" fill="none" stroke="#6e6e6e" stroke-width="1.3"/><rect x="4.5" y="3.5" width="7" height="8" fill="none" stroke="#6e6e6e" stroke-width="1.1"/><path d="M6 5.5h4M6 7.5h4M6 9.5h4" stroke="#6e6e6e" stroke-width="1"/></svg>
<svg style="left:882px;top:698px;" width="16" height="15" viewBox="0 0 16 15"><rect x="1.6" y="1.6" width="12.8" height="11.8" fill="none" stroke="#6e6e6e" stroke-width="1.3"/><path d="M4.5 1.5V8.5H10.5V1.5M7.5 1.5V8.5" fill="none" stroke="#6e6e6e" stroke-width="1.1"/></svg>
<div style="left:914px;top:706px;width:6px;height:2px;background:#5a2a2a"></div>
<div style="left:924px;top:706px;width:101px;height:1px;background:#9a9a9a"></div>
<div style="left:972px;top:700px;width:5px;height:11px;background:#777"></div>
<svg style="left:1027px;top:701px;" width="10" height="10" viewBox="0 0 10 10"><path d="M5 1v8M1 5h8" stroke="#555" stroke-width="1.6"/></svg>
<span class="t" style="left:1046.7px;top:700.27px;font-size:11.5px;color:#4a1616;font-weight:normal;letter-spacing:-0.6px">100 %</span>
<div style="left:0px;top:65px;width:1px;height:653px;background:#00733f"></div>
<div style="left:1095px;top:65px;width:1px;height:653px;background:#00733f"></div>
<div style="left:0px;top:717px;width:1096px;height:1px;background:#00733f"></div>
</body></html>
